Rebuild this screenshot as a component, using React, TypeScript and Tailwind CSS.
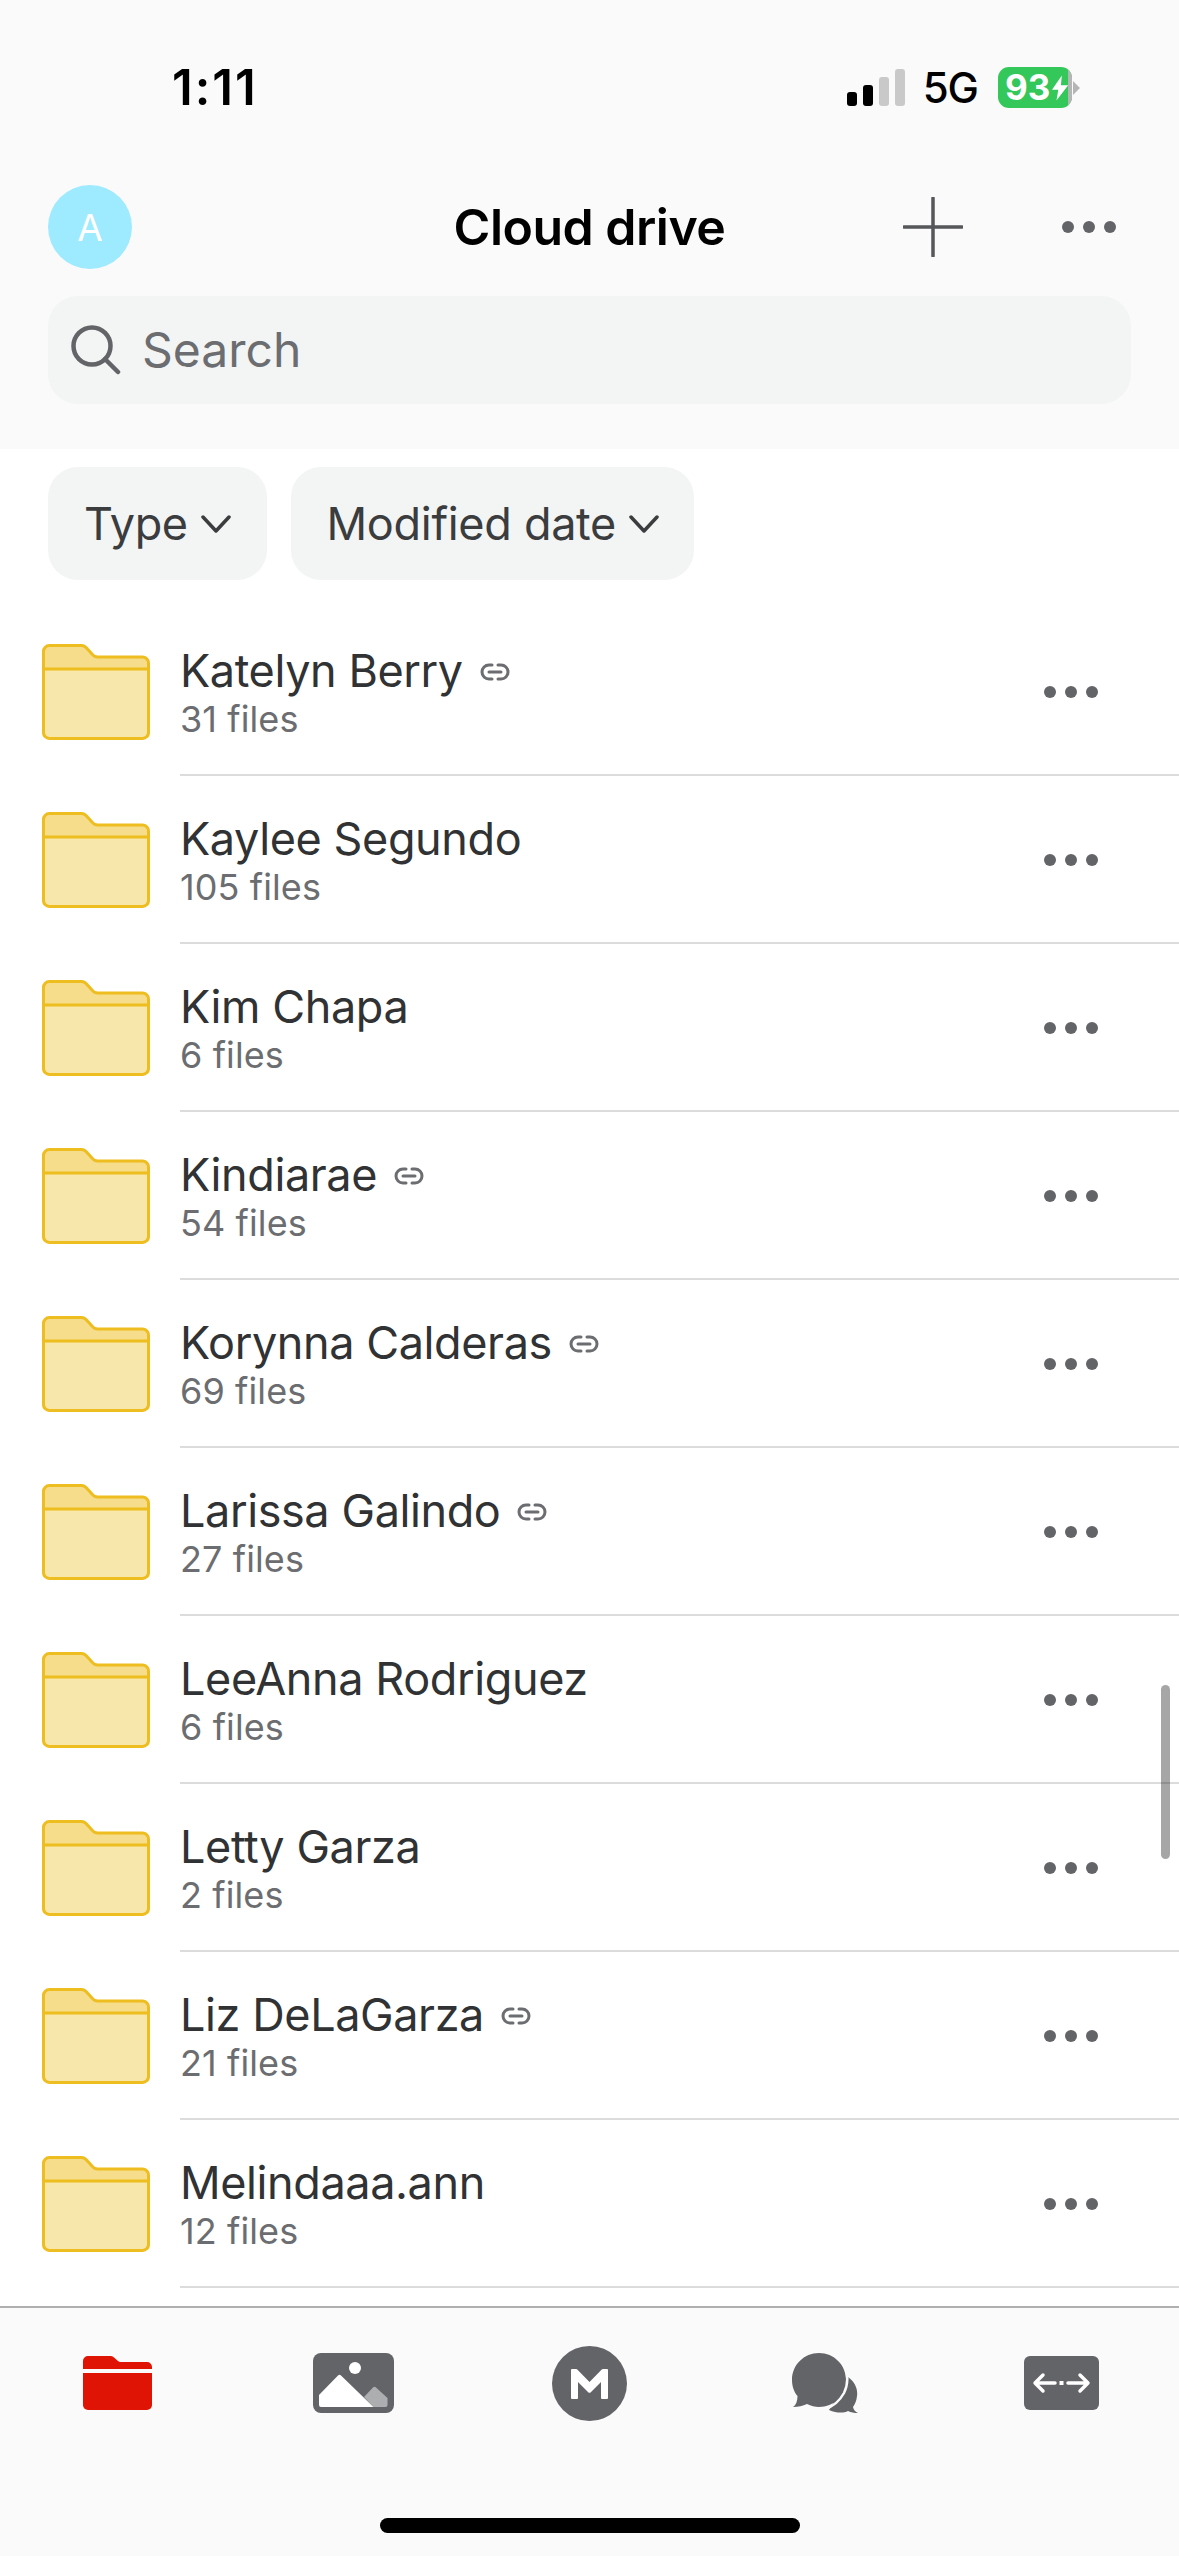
const folders = [
  { name: "Katelyn Berry", files: "31 files", shared: true },
  { name: "Kaylee Segundo", files: "105 files", shared: false },
  { name: "Kim Chapa", files: "6 files", shared: false },
  { name: "Kindiarae", files: "54 files", shared: true },
  { name: "Korynna Calderas", files: "69 files", shared: true },
  { name: "Larissa Galindo", files: "27 files", shared: true },
  { name: "LeeAnna Rodriguez", files: "6 files", shared: false },
  { name: "Letty Garza", files: "2 files", shared: false },
  { name: "Liz DeLaGarza", files: "21 files", shared: true },
  { name: "Melindaaa.ann", files: "12 files", shared: false },
];

function Dots({ className }: { className: string }) {
  return (
    <div className={`flex gap-[9px] ${className}`}>
      <span className="size-[12px] rounded-full bg-[#636468]" />
      <span className="size-[12px] rounded-full bg-[#636468]" />
      <span className="size-[12px] rounded-full bg-[#636468]" />
    </div>
  );
}

function Chevron() {
  return (
    <svg width="32" height="18" viewBox="0 0 32 18" fill="none" stroke="#3a3c3e" strokeWidth="3.5" strokeLinecap="round" strokeLinejoin="round">
      <path d="M3 2 L16 16 L29 2" />
    </svg>
  );
}

function FolderIcon() {
  return (
    <svg width="108" height="96" viewBox="0 0 108 96" className="shrink-0">
      <path d="M1.5 25 V8 a6 6 0 0 1 6-6.5 H39 a6 6 0 0 1 5 2 L50 10 a7 7 0 0 0 6 3 H100 a6 6 0 0 1 6.5 6 V25 Z" fill="#f6dd8b" />
      <path d="M1.5 25 H106.5 V88 a6 6 0 0 1-6 6.5 H7.5 a6 6 0 0 1-6-6.5 Z" fill="#f8e7ab" />
      <path d="M1.5 88 V8 a6 6 0 0 1 6-6.5 H39 a6 6 0 0 1 5 2 L50 10 a7 7 0 0 0 6 3 H100 a6 6 0 0 1 6.5 6 V88 a6 6 0 0 1-6 6.5 H7.5 a6 6 0 0 1-6-6.5 Z M1.5 25 H106.5" fill="none" stroke="#eebd1f" strokeWidth="3" />
    </svg>
  );
}

function LinkIcon() {
  return (
    <svg width="30" height="20" viewBox="0 0 30 20" fill="none" stroke="#6b6d70" strokeWidth="3" strokeLinecap="round" className="ml-[17px] mt-[2px] shrink-0">
      <path d="M12 3 H9 a7 7 0 0 0 0 14 H12 M18 3 H21 a7 7 0 0 1 0 14 H18 M9 10 H21" />
    </svg>
  );
}

function FolderRow({ name, files, shared }: { name: string; files: string; shared: boolean }) {
  return (
    <div className="flex h-[168px] items-center pl-[42px]">
      <FolderIcon />
      <div className="ml-[30px] flex h-full flex-1 items-center justify-between border-b-[2px] border-[#dcdcdc] pr-[81px]">
        <div className="flex flex-col pt-[5px]">
          <div className="flex h-[50px] items-center">
            <span className="text-[45px] leading-[50px] tracking-[-0.4px] text-[#303233]">{name}</span>
            {shared && <LinkIcon />}
          </div>
          <span className="text-[36px] leading-[46px] tracking-[0.1px] text-[#6b6d70]">{files}</span>
        </div>
        <Dots className="mt-[2px]" />
      </div>
    </div>
  );
}

function SignalBars() {
  return (
    <div className="flex items-end gap-[6px]">
      <span className="h-[14px] w-[10px] rounded-[3px] bg-black" />
      <span className="h-[21px] w-[10px] rounded-[3px] bg-black" />
      <span className="h-[29px] w-[10px] rounded-[3px] bg-[#c9c9c9]" />
      <span className="h-[37px] w-[10px] rounded-[3px] bg-[#c9c9c9]" />
    </div>
  );
}

function Battery() {
  return (
    <div className="flex items-center">
      <div className="flex h-[41px] w-[74px] items-center overflow-hidden rounded-[11px] bg-[#34c759]">
        <span className="ml-[7px] text-[35px] font-bold leading-[41px] text-white">93</span>
        <svg width="18" height="28" viewBox="0 0 18 28" className="ml-[2px]">
          <path d="M11 0 L0 16 H7 L5 28 L18 11 H10 Z" fill="#fff" />
        </svg>
        <span className="ml-auto h-full w-[4px] bg-[#b5b5b5]" />
      </div>
      <svg width="8" height="14" viewBox="0 0 8 14" className="ml-[1px]">
        <path d="M0 0 L7 7 L0 14 Z" fill="#b5b5b5" />
      </svg>
    </div>
  );
}

function RedFolder() {
  return (
    <svg width="69" height="54" viewBox="0 0 69 54">
      <path d="M0 13 V5 a5 5 0 0 1 5-5 H28 a4 4 0 0 1 3 1.5 L35 5 a4 4 0 0 0 3 1 H64 a5 5 0 0 1 5 5 V13 Z" fill="#df1404" />
      <path d="M0 17 H69 V49 a5 5 0 0 1-5 5 H5 a5 5 0 0 1-5-5 Z" fill="#df1404" />
    </svg>
  );
}

function PhotoIcon() {
  return (
    <svg width="81" height="60" viewBox="0 0 81 60">
      <rect width="81" height="60" rx="8" fill="#636468" />
      <ellipse cx="42" cy="15" rx="6" ry="6" fill="#fff" />
      <path d="M51 44 L60 34.5 a2 2 0 0 1 3 0 L74.5 45 V52 a2 2 0 0 1-2 2 H60.5 Z" fill="#adaeb0" />
      <path d="M6 42 L25 22.5 a2 2 0 0 1 3 0 L60.5 54 H8 a2 2 0 0 1-2-2 Z" fill="#fff" />
    </svg>
  );
}

function MegaIcon() {
  return (
    <svg width="75" height="75" viewBox="0 0 75 75">
      <circle cx="37.5" cy="37.5" r="37.5" fill="#636468" />
      <path d="M19 52 V24 a1 1 0 0 1 1-1 H24 a2 2 0 0 1 1.500 .7 L37.500 36 L49.500 23.700 a2 2 0 0 1 1.500-.7 H55 a1 1 0 0 1 1 1 V52 a1 1 0 0 1-1 1 H50 a1 1 0 0 1-1-1 V36 L39 46 a2 2 0 0 1-3 0 L26 36 V52 a1 1 0 0 1-1 1 H20 a1 1 0 0 1-1-1 Z" fill="#fff" />
    </svg>
  );
}

function ChatIcon() {
  return (
    <svg width="66" height="60" viewBox="0 0 66 60">
      <path d="M56 24 C63 29 66 36 65 43 C64.500 48 63 51 61 54 C61.500 57 63.500 59 66 60 C62 60 59 59.500 56 58 C52 60 45 60.500 37 57 Z" fill="#636468" />
      <path d="M27 0 C42 0 54 12 54 27 C54 42 42 54 27 54 C23 54 19 53 15 51 C11 53 6 54 1 54 C4 52 5.500 48 5.500 43 C2 39 0 33 0 27 C0 12 12 0 27 0 Z" fill="#636468" />
      <path d="M53 13 C56 20 56.500 31 52 40 C47 49 40 54 33 56" fill="none" stroke="#fafafa" strokeWidth="2.500" />
    </svg>
  );
}

function TransferIcon() {
  return (
    <svg width="75" height="54" viewBox="0 0 75 54">
      <rect width="75" height="54" rx="6" fill="#636468" />
      <path d="M19 19 L11 27 L19 35 M11 27 H31 M44 27 H64 M56 19 L64 27 L56 35" fill="none" stroke="#fff" strokeWidth="3.500" strokeLinecap="round" strokeLinejoin="round" />
      <rect x="35.500" y="25" width="4" height="4" fill="#fff" />
    </svg>
  );
}

export default function App() {
  return (
    <div className="relative flex h-[2556px] w-[1179px] flex-col overflow-hidden bg-white font-['Inter',sans-serif]">
      <header className="flex h-[449px] shrink-0 flex-col bg-[#fafafa]">
        <div className="flex h-[185px] shrink-0 items-start justify-between pl-[172px] pr-[98px] pt-[64px]">
          <span className="text-[49px] font-semibold leading-[48px] tracking-[2px] text-black">1:11</span>
          <div className="mt-[3px] flex items-center">
            <SignalBars />
            <span className="ml-[18px] text-[42px] font-medium leading-[41px] tracking-[-1px] text-black">5G</span>
            <div className="ml-[20px]">
              <Battery />
            </div>
          </div>
        </div>
        <div className="grid h-[84px] shrink-0 grid-cols-[1fr_auto_1fr] items-center px-[48px]">
          <div className="flex size-[84px] items-center justify-center rounded-full bg-[#9eeaff]">
            <span className="text-[37px] leading-none text-white">A</span>
          </div>
          <h1 className="text-[50px] font-semibold leading-none tracking-[-0.5px] text-black">Cloud drive</h1>
          <div className="flex items-center justify-end gap-[99px] pr-[15px]">
            <svg width="60" height="60" viewBox="0 0 60 60" fill="none" stroke="#55575a" strokeWidth="3.5" strokeLinecap="round">
              <path d="M30 1 V59 M1 30 H59" />
            </svg>
            <Dots className="" />
          </div>
        </div>
        <div className="mx-[48px] mt-[27px] flex h-[108px] items-center rounded-[30px] bg-[#f3f4f4] pl-[23px]">
          <svg width="50" height="50" viewBox="0 0 50 50" fill="none" stroke="#636468" strokeWidth="4.500" strokeLinecap="round">
            <circle cx="21" cy="21" r="18.500" />
            <path d="M34 34 L47 47" />
          </svg>
          <span className="ml-[21px] text-[48px] leading-none text-[#6b6d70]">Search</span>
        </div>
      </header>

      <div className="flex shrink-0 gap-[24px] px-[48px] pt-[18px]">
        <button className="flex h-[113px] items-center gap-[12px] rounded-[30px] bg-[#f3f4f4] pl-[36px] pr-[35px]">
          <span className="text-[45px] leading-none tracking-[-0.45px] text-[#3a3c3e]">Type</span>
          <Chevron />
        </button>
        <button className="flex h-[113px] items-center gap-[12px] rounded-[30px] bg-[#f3f4f4] pl-[36px] pr-[34px]">
          <span className="text-[45px] leading-none tracking-[-0.3px] text-[#3a3c3e]">Modified date</span>
          <Chevron />
        </button>
      </div>

      <div className="mt-[28px] flex-1 overflow-hidden">
        {folders.map((f) => (
          <FolderRow key={f.name} name={f.name} files={f.files} shared={f.shared} />
        ))}
      </div>

      {/* scroll position indicator */}
      <div className="absolute left-[1161px] top-[1685px] h-[174px] w-[9px] rounded-full bg-black/35" />

      <nav className="flex h-[250px] shrink-0 flex-col items-center border-t-[2px] border-[#b0b0b0] bg-[#fafafa]">
        <div className="grid h-[150px] w-full grid-cols-5 place-items-center">
          <RedFolder />
          <PhotoIcon />
          <MegaIcon />
          <ChatIcon />
          <TransferIcon />
        </div>
        <div className="mt-[60px] h-[15px] w-[420px] rounded-full bg-black" />
      </nav>
    </div>
  );
}
